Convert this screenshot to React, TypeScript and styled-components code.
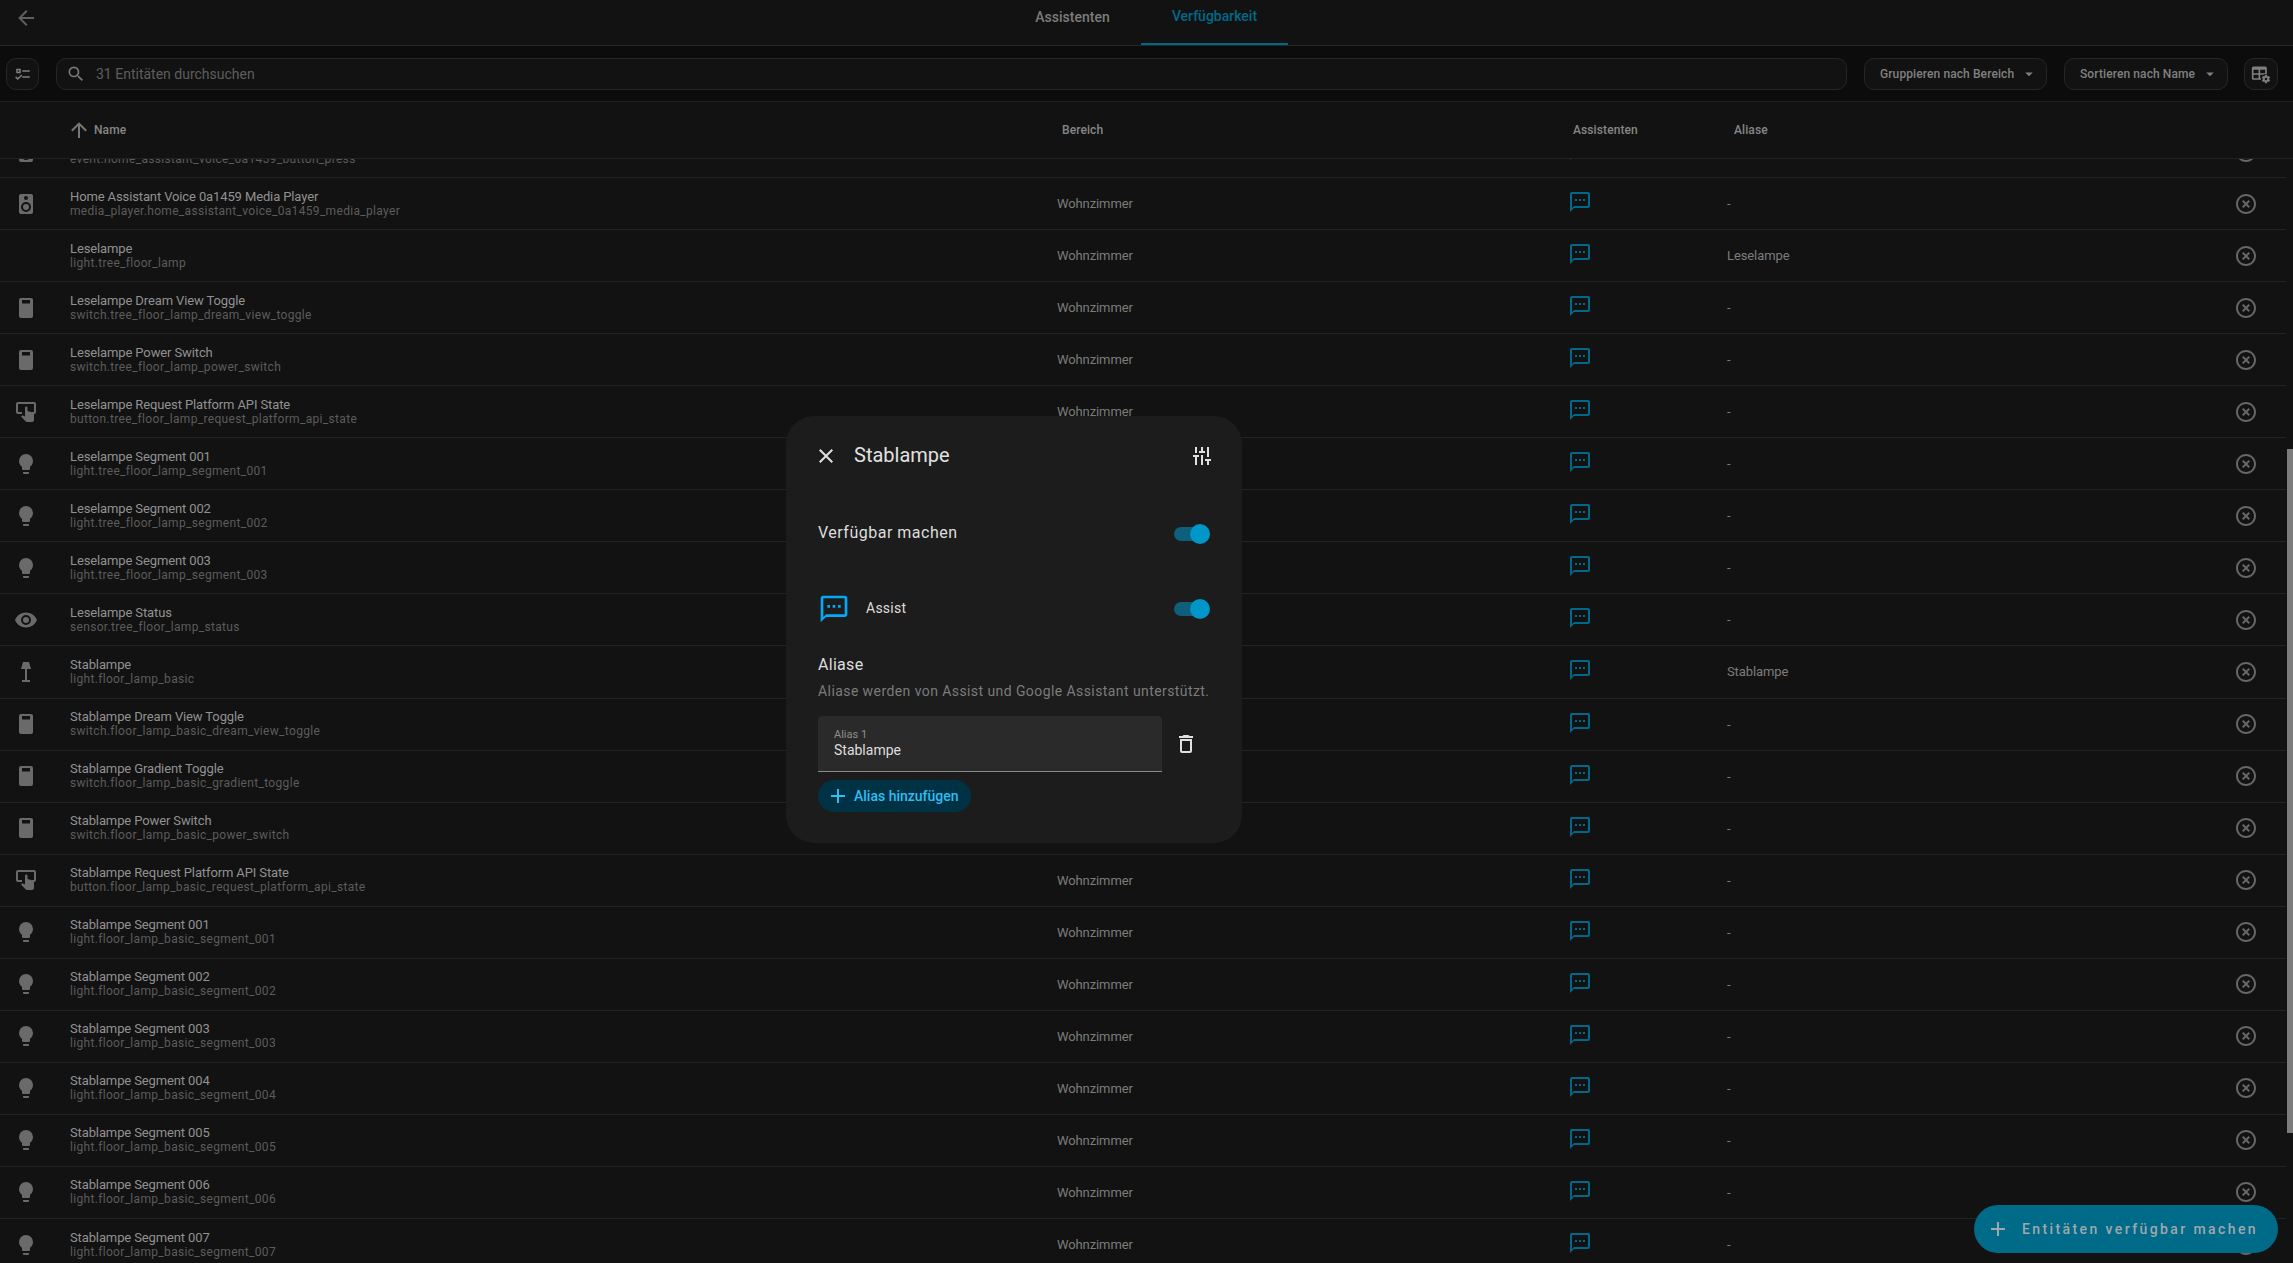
import styled, { createGlobalStyle } from "styled-components";

const paths = {
    back: "M20,11V13H8L13.5,18.5L12.08,19.92L4.16,12L12.08,4.08L13.5,5.5L8,11H20Z",
    up: "M13,20H11V8L5.5,13.5L4.08,12.08L12,4.16L19.92,12.08L18.5,13.5L13,8V20Z",
    search: "M9.5,3A6.5,6.5 0 0,1 16,9.5C16,11.11 15.41,12.59 14.44,13.73L14.71,14H15.5L20.5,19L19,20.5L14,15.5V14.71L13.73,14.44C12.59,15.41 11.11,16 9.5,16A6.5,6.5 0 0,1 3,9.5A6.5,6.5 0 0,1 9.5,3M9.5,5C7,5 5,7 5,9.5C5,12 7,14 9.5,14C12,14 14,12 14,9.5C14,7 12,5 9.5,5Z",
    checks: "M3,5H9V11H3V5M5,7V9H7V7H5M11,7H21V9H11V7M11,15H21V17H11V15M5,20L1.5,16.5L2.91,15.09L5,17.17L9.59,12.59L11,14L5,20Z",
    close: "M19,6.41L17.59,5L12,10.59L6.41,5L5,6.41L10.59,12L5,17.59L6.41,19L12,13.41L17.59,19L19,17.59L13.41,12L19,6.41Z",
    tune: "M5 3H7V9H5ZM3 11H9V13H7V21H5V13H3ZM11 3H13V7H15V9H9V7H11ZM11 11H13V21H11ZM17 3H19V13H17ZM15 15H21V17H19V21H17V17H15Z",
    message: "M20,2H4A2,2 0 0,0 2,4V22L6,18H20A2,2 0 0,0 22,16V4A2,2 0 0,0 20,2M20,16H6L4,18V4H20M7,9H9V11H7V9M11,9H13V11H11V9M15,9H17V11H15V9",
    remove: "M12,20C7.59,20 4,16.41 4,12C4,7.59 7.59,4 12,4C16.41,4 20,7.59 20,12C20,16.41 16.41,20 12,20M12,2C6.47,2 2,6.47 2,12C2,17.53 6.47,22 12,22C17.53,22 22,17.53 22,12C22,6.47 17.53,2 12,2M14.59,8L12,10.59L9.41,8L8,9.41L10.59,12L8,14.59L9.41,16L12,13.41L14.59,16L16,14.59L13.41,12L16,9.41L14.59,8Z",
    trash: "M6,19A2,2 0 0,0 8,21H16A2,2 0 0,0 18,19V7H6V19M8,9H16V19H8V9M15.5,4L14.5,3H9.5L8.5,4H5V6H19V4H15.5Z",
    plus: "M19,13H13V19H11V13H5V11H11V5H13V11H19V13Z",
    menuDown: "M7,10L12,15L17,10H7Z",
    bulb: "M12,2A7,7 0 0,0 5,9C5,11.38 6.19,13.47 8,14.74V17A1,1 0 0,0 9,18H15A1,1 0 0,0 16,17V14.74C17.81,13.47 19,11.38 19,9A7,7 0 0,0 12,2M9,21A1,1 0 0,0 10,22H14A1,1 0 0,0 15,21V20H9V21Z",
    eye: "M12,9A3,3 0 0,0 9,12A3,3 0 0,0 12,15A3,3 0 0,0 15,12A3,3 0 0,0 12,9M12,17A5,5 0 0,1 7,12A5,5 0 0,1 12,7A5,5 0 0,1 17,12A5,5 0 0,1 12,17M12,4.5C7,4.5 2.73,7.61 1,12C2.73,16.39 7,19.5 12,19.5C17,19.5 21.27,16.39 23,12C21.27,7.61 17,4.5 12,4.5Z",
    lamp: "M9 2H15L17 9H7L9 2M11 9H13V20H16V22H8V20H11V9Z",
    speaker: "M12,12A3,3 0 0,0 9,15A3,3 0 0,0 12,18A3,3 0 0,0 15,15A3,3 0 0,0 12,12M12,20A5,5 0 0,1 7,15A5,5 0 0,1 12,10A5,5 0 0,1 17,15A5,5 0 0,1 12,20M12,4A2,2 0 0,1 14,6A2,2 0 0,1 12,8C10.89,8 10,7.1 10,6C10,4.89 10.89,4 12,4M17,2H7C5.89,2 5,2.89 5,4V20A2,2 0 0,0 7,22H17A2,2 0 0,0 19,20V4C19,2.89 18.1,2 17,2Z",
    toggle: "M7,2H17A2,2 0 0,1 19,4V20A2,2 0 0,1 17,22H7A2,2 0 0,1 5,20V4A2,2 0 0,1 7,2M8,4V7.5H16V4H8Z",
    pointer: "M4 2H20A2 2 0 0 1 22 4V12A2 2 0 0 1 20 14H18V12H20V4H4V12H8V14H4A2 2 0 0 1 2 12V4A2 2 0 0 1 4 2ZM11 7.5A1.3 1.3 0 0 1 13.5 7.5V11L18 12.2C19.2 12.5 20 13.5 20 14.7V20C20 21.2 19 22 18 22H13C12.4 22 11.9 21.8 11.5 21.3L7 16.5L8.2 15.3L11 16.5Z",
    tableCog: "M3 3H17C18.11 3 19 3.9 19 5V12.08C17.45 11.82 15.92 12.18 14.68 13H11V17H12.08C11.97 17.68 11.97 18.35 12.08 19H3C1.9 19 1 18.11 1 17V5C1 3.9 1.9 3 3 3M3 7V11H9V7H3M11 7V11H17V7H11M3 13V17H9V13H3M22.78 19.32L21.71 18.5C21.73 18.33 21.75 18.17 21.75 18S21.74 17.67 21.71 17.5L22.77 16.68C22.86 16.6 22.89 16.47 22.83 16.36L21.83 14.63C21.77 14.5 21.64 14.5 21.52 14.5L20.28 15C20 14.82 19.74 14.65 19.43 14.53L19.24 13.21C19.23 13.09 19.12 13 19 13H17C16.88 13 16.77 13.09 16.75 13.21L16.56 14.53C16.26 14.66 15.97 14.82 15.71 15L14.47 14.5C14.36 14.5 14.23 14.5 14.16 14.63L13.16 16.36C13.1 16.47 13.12 16.6 13.22 16.68L14.28 17.5C14.26 17.67 14.25 17.84 14.25 18S14.26 18.33 14.28 18.5L13.22 19.32C13.13 19.4 13.1 19.53 13.16 19.64L14.16 21.37C14.22 21.5 14.35 21.5 14.47 21.5L15.71 21C15.97 21.18 16.25 21.35 16.56 21.47L16.75 22.79C16.77 22.91 16.87 23 17 23H19C19.12 23 19.23 22.91 19.25 22.79L19.44 21.47C19.74 21.34 20 21.18 20.28 21L21.53 21.5C21.64 21.5 21.77 21.5 21.84 21.37L22.84 19.64C22.9 19.53 22.87 19.4 22.78 19.32M18 19.5C17.17 19.5 16.5 18.83 16.5 18S17.17 16.5 18 16.5 19.5 17.17 19.5 18 18.84 19.5 18 19.5Z",
};

type IconName = keyof typeof paths;

function Icon({ name, size = 24, color = "currentColor" }: { name: IconName; size?: number; color?: string }) {
    return (
        <svg width={size} height={size} viewBox="0 0 24 24" fill={color} style={{ display: "block", flexShrink: 0 }}>
            <path d={paths[name]} />
        </svg>
    );
}

const GlobalStyle = createGlobalStyle`
    html, body {
        margin: 0;
        background: #121212;
        font-family: Roboto, "Liberation Sans", sans-serif;
    }
`;

const Page = styled.div`
    position: relative;
    width: 2293px;
    height: 1263px;
    overflow: hidden;
    display: flex;
    flex-direction: column;
    background: #121212;
`;

const TopBar = styled.header`
    height: 45px;
    flex-shrink: 0;
    display: flex;
    border-bottom: 1px solid #272727;
    box-sizing: content-box;
`;

const BackButton = styled.div`
    width: 38px;
    padding-top: 6px;
    padding-left: 14px;
    color: #5f5f5f;
`;

const Tabs = styled.nav`
    margin-left: 942px;
    display: flex;
`;

const Tab = styled.div<{ $active?: boolean }>`
    height: 45px;
    box-sizing: border-box;
    width: 147px;
    margin-left: ${(p) => (p.$active ? "0" : "5px")};
    margin-right: ${(p) => (p.$active ? "0" : "-5px")};
    padding-top: ${(p) => (p.$active ? "7px" : "8px")};
    text-align: center;
    font-size: 14px;
    line-height: 18px;
    font-weight: 500;
    color: ${(p) => (p.$active ? "#00698a" : "#7c7c7c")};
    border-bottom: 2px solid ${(p) => (p.$active ? "#00698a" : "transparent")};
`;

const Toolbar = styled.div`
    height: 55px;
    flex-shrink: 0;
    display: flex;
    align-items: center;
    padding: 0 15px 0 6px;
    gap: 17px;
    background: #0c0c0c;
    border-bottom: 1px solid #1f1f1f;
`;

const ToolButton = styled.div<{ $width: number }>`
    width: ${(p) => p.$width}px;
    height: 32px;
    box-sizing: border-box;
    flex-shrink: 0;
    display: flex;
    align-items: center;
    justify-content: center;
    background: #121212;
    border: 1px solid #262626;
    border-radius: 10px;
    color: #7f7f7f;
`;

const SettingsButton = styled(ToolButton)`
    margin-left: -1px;
`;

const SearchBox = styled(ToolButton)`
    flex: 1 1 auto;
    justify-content: flex-start;
    padding-left: 9px;
    gap: 10px;
    font-size: 14px;
    color: #5e5e5e;
    width: auto;
`;

const SelectButton = styled(ToolButton)`
    justify-content: space-between;
    padding: 0 8px 0 15px;
    font-size: 12px;
    font-weight: 500;
    color: #808080;
    letter-spacing: 0.1px;
`;

const ColumnGrid = styled.div`
    display: grid;
    grid-template-columns: 70px 987px 503px 166px 1fr 80px;
    align-items: center;
    width: 2286px;
`;

const TableHead = styled(ColumnGrid)`
    height: 56px;
    flex-shrink: 0;
    width: 100%;
    border-bottom: 1px solid #222;
    font-size: 12px;
    font-weight: 500;
    letter-spacing: 0.1px;
    color: #868686;
`;

const HeadName = styled.div`
    grid-column: 2;
    display: flex;
    align-items: center;
    gap: 3px;
    margin-left: -3px;
`;

const HeadLabel = styled.div<{ $offset: number }>`
    margin-left: ${(p) => p.$offset}px;
`;

const ListViewport = styled.div`
    flex: 1;
    overflow: hidden;
    min-height: 0;
`;

const RowList = styled.div`
    margin-top: -33px;
`;

const Row = styled(ColumnGrid)`
    height: 52.05px;
    box-sizing: border-box;
    border-bottom: 1px solid #222;
`;

const RowIcon = styled.div`
    display: flex;
    justify-content: center;
    padding-right: 18px;
    color: #6a6a6a;
`;

const NameCell = styled.div`
    display: flex;
    flex-direction: column;
`;

const EntityName = styled.div`
    font-size: 13px;
    line-height: 14px;
    color: #919191;
    letter-spacing: -0.12px;
`;

const EntityId = styled.div`
    font-size: 12px;
    line-height: 14px;
    color: #5c5c5c;
    letter-spacing: 0.32px;
`;

const TextCell = styled.div`
    font-size: 13px;
    color: #7c7c7c;
    letter-spacing: -0.1px;
`;

const AliasCell = styled(TextCell)`
    margin-left: 1px;
`;

const AssistCell = styled.div`
    padding-bottom: 3px;
    padding-left: 8px;
    color: #00688a;
`;

const RemoveCell = styled.div`
    display: flex;
    justify-content: flex-end;
    padding-right: 28px;
    color: #666;
`;

const ScrollThumb = styled.div`
    position: absolute;
    left: 2287px;
    top: 449px;
    width: 6px;
    height: 684px;
    background: #7c7c7c;
`;

const Fab = styled.div`
    position: absolute;
    left: 1974px;
    top: 1205px;
    width: 304px;
    height: 48px;
    box-sizing: border-box;
    display: flex;
    align-items: center;
    gap: 12px;
    padding-left: 12px;
    border-radius: 24px;
    background: #006a89;
    color: #a0a8ab;
    font-size: 14px;
    font-weight: 500;
    letter-spacing: 2.4px;
`;

const Dialog = styled.section`
    position: absolute;
    left: 786px;
    top: 416px;
    width: 456px;
    height: 427px;
    box-sizing: border-box;
    padding: 0 32px;
    display: flex;
    flex-direction: column;
    background: #1c1c1c;
    border-radius: 28px;
    color: #e1e1e1;
`;

const DialogHeader = styled.div`
    height: 80px;
    flex-shrink: 0;
    display: flex;
    align-items: center;
    margin: 0 -4px;
    gap: 16px;
`;

const DialogTitle = styled.h2`
    flex: 1;
    margin: 0 0 2px;
    font-size: 20px;
    font-weight: 400;
    color: #e1e1e1;
`;

const ToggleRow = styled.div<{ $height: number }>`
    height: ${(p) => p.$height}px;
    flex-shrink: 0;
    display: flex;
    align-items: center;
    gap: 16px;
`;

const ToggleLabel = styled.div<{ $large?: boolean }>`
    flex: 1;
    font-size: ${(p) => (p.$large ? "16px" : "14px")};
    letter-spacing: ${(p) => (p.$large ? "0.5px" : "0.25px")};
    margin-bottom: 3px;
    color: #dedede;
`;

const SwitchTrack = styled.div`
    position: relative;
    width: 32px;
    height: 14px;
    margin-right: 4px;
    border-radius: 7px;
    background: #0d5f7c;
`;

const SwitchThumb = styled.div`
    position: absolute;
    right: -4px;
    top: -3px;
    width: 20px;
    height: 20px;
    border-radius: 50%;
    background: #0097c8;
`;

const SectionTitle = styled.h3`
    margin: 7px 0 0;
    font-size: 16px;
    line-height: 24px;
    font-weight: 400;
    letter-spacing: 0.3px;
    color: #dedede;
`;

const SectionHint = styled.p`
    margin: 4px 0 0;
    font-size: 14px;
    line-height: 20px;
    letter-spacing: 0.42px;
    white-space: nowrap;
    color: #7b7b7b;
`;

const AliasRow = styled.div`
    margin-top: 15px;
    display: flex;
    align-items: center;
    gap: 12px;
`;

const AliasField = styled.div`
    width: 344px;
    height: 56px;
    box-sizing: border-box;
    padding: 11px 16px 0;
    background: #2a2a2a;
    border-bottom: 1px solid #8a8a8a;
    border-radius: 4px 4px 0 0;
`;

const AliasLabel = styled.div`
    font-size: 11px;
    line-height: 15px;
    color: #8e8e8e;
`;

const AliasValue = styled.div`
    font-size: 14px;
    line-height: 17px;
    color: #dedede;
`;

const AddButton = styled.div`
    margin-top: 8px;
    width: 153px;
    height: 32px;
    flex-shrink: 0;
    display: flex;
    align-items: center;
    gap: 4px;
    padding-left: 8px;
    box-sizing: border-box;
    border-radius: 16px;
    background: #003245;
    color: #2fbdf2;
    font-size: 14px;
    font-weight: 500;
`;

type Entity = { name: string; id: string; icon?: IconName; alias?: string };

const lampRows = (title: string, key: string): Entity[] =>
    [1, 2, 3].map((n) => ({
        name: `${title} Segment 00${n}`,
        id: `light.${key}_segment_00${n}`,
        icon: "bulb" as IconName,
    }));

const entities: Entity[] = [
    { name: "Home Assistant Voice 0a1459 Button Press", id: "event.home_assistant_voice_0a1459_button_press", icon: "speaker" },
    { name: "Home Assistant Voice 0a1459 Media Player", id: "media_player.home_assistant_voice_0a1459_media_player", icon: "speaker" },
    { name: "Leselampe", id: "light.tree_floor_lamp", alias: "Leselampe" },
    { name: "Leselampe Dream View Toggle", id: "switch.tree_floor_lamp_dream_view_toggle", icon: "toggle" },
    { name: "Leselampe Power Switch", id: "switch.tree_floor_lamp_power_switch", icon: "toggle" },
    { name: "Leselampe Request Platform API State", id: "button.tree_floor_lamp_request_platform_api_state", icon: "pointer" },
    ...lampRows("Leselampe", "tree_floor_lamp"),
    { name: "Leselampe Status", id: "sensor.tree_floor_lamp_status", icon: "eye" },
    { name: "Stablampe", id: "light.floor_lamp_basic", icon: "lamp", alias: "Stablampe" },
    { name: "Stablampe Dream View Toggle", id: "switch.floor_lamp_basic_dream_view_toggle", icon: "toggle" },
    { name: "Stablampe Gradient Toggle", id: "switch.floor_lamp_basic_gradient_toggle", icon: "toggle" },
    { name: "Stablampe Power Switch", id: "switch.floor_lamp_basic_power_switch", icon: "toggle" },
    { name: "Stablampe Request Platform API State", id: "button.floor_lamp_basic_request_platform_api_state", icon: "pointer" },
    ...[1, 2, 3, 4, 5, 6, 7].map((n) => ({
        name: `Stablampe Segment 00${n}`,
        id: `light.floor_lamp_basic_segment_00${n}`,
        icon: "bulb" as IconName,
    })),
];

export default function App() {
    return (
        <Page>
            <GlobalStyle />
            <TopBar>
                <BackButton>
                    <Icon name="back" />
                </BackButton>
                <Tabs>
                    <Tab>Assistenten</Tab>
                    <Tab $active>Verfügbarkeit</Tab>
                </Tabs>
            </TopBar>
            <Toolbar>
                <ToolButton $width={33}>
                    <Icon name="checks" size={18} />
                </ToolButton>
                <SearchBox $width={0}>
                    <Icon name="search" size={20} color="#777" />
                    31 Entitäten durchsuchen
                </SearchBox>
                <SelectButton $width={183}>
                    Gruppieren nach Bereich
                    <Icon name="menuDown" size={18} />
                </SelectButton>
                <SelectButton $width={164}>
                    Sortieren nach Name
                    <Icon name="menuDown" size={18} />
                </SelectButton>
                <SettingsButton $width={34}>
                    <Icon name="tableCog" size={20} />
                </SettingsButton>
            </Toolbar>
            <TableHead>
                <HeadName>
                    <Icon name="up" size={24} color="#777" />
                    Name
                </HeadName>
                <HeadLabel $offset={5}>Bereich</HeadLabel>
                <HeadLabel $offset={13}>Assistenten</HeadLabel>
                <HeadLabel $offset={8}>Aliase</HeadLabel>
            </TableHead>
            <ListViewport>
                <RowList>
                    {entities.map((e) => (
                        <Row key={e.id}>
                            <RowIcon>{e.icon && <Icon name={e.icon} />}</RowIcon>
                            <NameCell>
                                <EntityName>{e.name}</EntityName>
                                <EntityId>{e.id}</EntityId>
                            </NameCell>
                            <TextCell>Wohnzimmer</TextCell>
                            <AssistCell>
                                <Icon name="message" />
                            </AssistCell>
                            <AliasCell>{e.alias ?? "-"}</AliasCell>
                            <RemoveCell>
                                <Icon name="remove" />
                            </RemoveCell>
                        </Row>
                    ))}
                </RowList>
            </ListViewport>
            <ScrollThumb />
            <Fab>
                <Icon name="plus" />
                Entitäten verfügbar machen
            </Fab>
            <Dialog>
                <DialogHeader>
                    <Icon name="close" color="#e1e1e1" />
                    <DialogTitle>Stablampe</DialogTitle>
                    <Icon name="tune" color="#e1e1e1" />
                </DialogHeader>
                <ToggleRow $height={76}>
                    <ToggleLabel $large>Verfügbar machen</ToggleLabel>
                    <SwitchTrack>
                        <SwitchThumb />
                    </SwitchTrack>
                </ToggleRow>
                <ToggleRow $height={74}>
                    <Icon name="message" size={32} color="#03a9f4" />
                    <ToggleLabel>Assist</ToggleLabel>
                    <SwitchTrack>
                        <SwitchThumb />
                    </SwitchTrack>
                </ToggleRow>
                <SectionTitle>Aliase</SectionTitle>
                <SectionHint>Aliase werden von Assist und Google Assistant unterstützt.</SectionHint>
                <AliasRow>
                    <AliasField>
                        <AliasLabel>Alias 1</AliasLabel>
                        <AliasValue>Stablampe</AliasValue>
                    </AliasField>
                    <Icon name="trash" color="#e1e1e1" />
                </AliasRow>
                <AddButton>
                    <Icon name="plus" color="#2fbdf2" />
                    Alias hinzufügen
                </AddButton>
            </Dialog>
        </Page>
    );
}
